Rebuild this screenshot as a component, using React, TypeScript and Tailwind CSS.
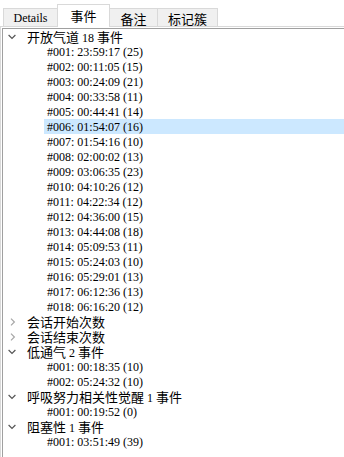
import React from "react";

type Group = { title: string; expanded: boolean; items: string[] };

const groups: Group[] = [
  {
    title: "开放气道 18 事件",
    expanded: true,
    items: [
      "#001: 23:59:17 (25)",
      "#002: 00:11:05 (15)",
      "#003: 00:24:09 (21)",
      "#004: 00:33:58 (11)",
      "#005: 00:44:41 (14)",
      "#006: 01:54:07 (16)",
      "#007: 01:54:16 (10)",
      "#008: 02:00:02 (13)",
      "#009: 03:06:35 (23)",
      "#010: 04:10:26 (12)",
      "#011: 04:22:34 (12)",
      "#012: 04:36:00 (15)",
      "#013: 04:44:08 (18)",
      "#014: 05:09:53 (11)",
      "#015: 05:24:03 (10)",
      "#016: 05:29:01 (13)",
      "#017: 06:12:36 (13)",
      "#018: 06:16:20 (12)",
    ],
  },
  { title: "会话开始次数", expanded: false, items: [] },
  { title: "会话结束次数", expanded: false, items: [] },
  {
    title: "低通气 2 事件",
    expanded: true,
    items: ["#001: 00:18:35 (10)", "#002: 05:24:32 (10)"],
  },
  {
    title: "呼吸努力相关性觉醒 1 事件",
    expanded: true,
    items: ["#001: 00:19:52 (0)"],
  },
  {
    title: "阻塞性 1 事件",
    expanded: true,
    items: ["#001: 03:51:49 (39)"],
  },
];

const font = {
  fontFamily: '"Liberation Serif", "Noto Sans CJK SC", serif',
};

function Mixed({ text }: { text: string }) {
  const parts = text.match(/[\u3400-\u9fff]+|[^\u3400-\u9fff]+/g) || [];
  return (
    <>
      {parts.map((p, i) =>
        /[\u3400-\u9fff]/.test(p) ? (
          <span
            key={i}
            className="text-[13px]"
            style={{ fontFamily: '"Noto Sans CJK SC", sans-serif' }}
          >
            {p}
          </span>
        ) : (
          <span key={i} className="text-[12px]">
            {p}
          </span>
        )
      )}
    </>
  );
}

function ChevronDown() {
  return (
    <svg width="8" height="6" viewBox="0 0 8 6" className="block">
      <polyline
        points="0.6,1 4,4.4 7.4,1"
        fill="none"
        stroke="#555555"
        strokeWidth="1.2"
      />
    </svg>
  );
}

function ChevronRight() {
  return (
    <svg width="6" height="8" viewBox="0 0 6 8" className="block">
      <polyline
        points="1,0.6 4.4,4 1,7.4"
        fill="none"
        stroke="#a6a6a6"
        strokeWidth="1.2"
      />
    </svg>
  );
}

export default function App() {
  return (
    <div
      className="w-[344px] h-[457px] bg-white overflow-hidden text-[12px] text-black leading-none"
      style={font}
    >
      {/* Tab strip */}
      <div className="h-[27px] flex items-end pl-[3px] border-b border-[#d9d9d9]">
        <div className="w-[54px] h-[18px] bg-[#f0f0f0] border-t border-l border-[#d9d9d9] flex items-center justify-center pt-[1px]">
          Details
        </div>
        <div className="relative z-10 -mb-px w-[53px] h-[23px] bg-white border-t border-l border-r border-[#d9d9d9] flex items-center justify-center pb-[2px]">
          <Mixed text="事件" />
        </div>
        <div className="w-[47px] h-[18px] bg-[#f0f0f0] border-t border-[#d9d9d9] flex items-center justify-center pt-[1px]">
          <Mixed text="备注" />
        </div>
        <div className="w-[61px] h-[18px] bg-[#f0f0f0] border-t border-l border-r border-[#d9d9d9] flex items-center justify-center pt-[1px]">
          <Mixed text="标记簇" />
        </div>
      </div>

      {/* Panel */}
      <div className="border-l border-[#d9d9d9] pl-[1px] pt-[1px] h-[430px]">
        <div className="border-l border-t border-[#a0a0a0] h-full flex flex-col">
          {groups.map((g) => (
            <React.Fragment key={g.title}>
              <div className="h-[15px] flex items-center shrink-0">
                <div className="w-[24px] flex items-center pl-[5px]">
                  {g.expanded ? (
                    <ChevronDown />
                  ) : (
                    <div className="pl-[2px]">
                      <ChevronRight />
                    </div>
                  )}
                </div>
                <span className="whitespace-nowrap">
                  <Mixed text={g.title} />
                </span>
              </div>
              {g.items.map((it) => {
                const selected = it === "#006: 01:54:07 (16)";
                return (
                  <div
                    key={g.title + it}
                    className="h-[15px] flex items-center shrink-0 pl-[41px]"
                  >
                    <div
                      className={
                        "flex-1 h-full flex items-center pl-[3px] whitespace-nowrap " +
                        (selected ? "bg-[#cce8ff]" : "")
                      }
                    >
                      {it}
                    </div>
                  </div>
                );
              })}
            </React.Fragment>
          ))}
        </div>
      </div>
    </div>
  );
}
